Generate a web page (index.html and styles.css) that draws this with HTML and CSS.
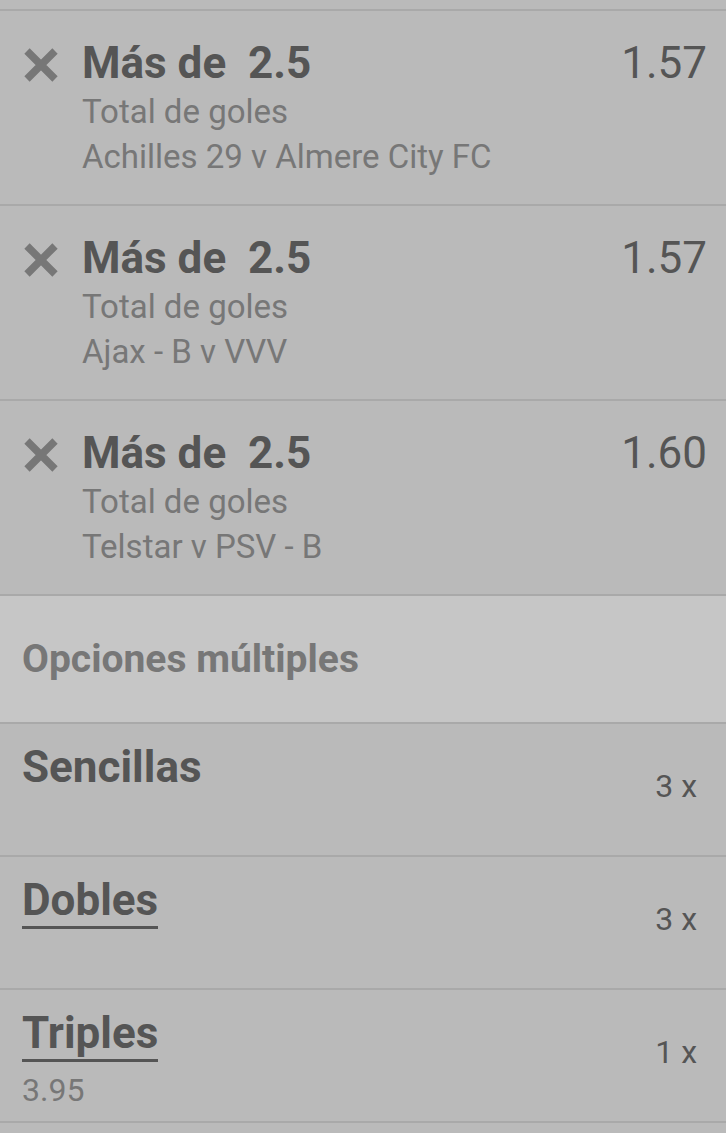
FILE: index.html
```html
<!doctype html>
<html lang="es">
<head>
    <meta charset="UTF-8">
    <meta name="viewport" content="width=device-width, initial-scale=1.0">
    <link rel="stylesheet" href="styles.css">
    <title>Boleto</title>
</head>
<body>
<div class="slip">

    <div class="bet">
        <svg class="remove" viewBox="0 0 36 36"><path d="M4 4 L32 32 M32 4 L4 32"/></svg>
        <div class="info">
            <div class="pick">Más de&nbsp; 2.5</div>
            <div class="market">Total de goles</div>
            <div class="market">Achilles 29 v Almere City FC</div>
        </div>
        <div class="odds">1.57</div>
    </div>

    <div class="bet">
        <svg class="remove" viewBox="0 0 36 36"><path d="M4 4 L32 32 M32 4 L4 32"/></svg>
        <div class="info">
            <div class="pick">Más de&nbsp; 2.5</div>
            <div class="market">Total de goles</div>
            <div class="market">Ajax - B v VVV</div>
        </div>
        <div class="odds">1.57</div>
    </div>

    <div class="bet">
        <svg class="remove" viewBox="0 0 36 36"><path d="M4 4 L32 32 M32 4 L4 32"/></svg>
        <div class="info">
            <div class="pick">Más de&nbsp; 2.5</div>
            <div class="market">Total de goles</div>
            <div class="market">Telstar v PSV - B</div>
        </div>
        <div class="odds">1.60</div>
    </div>

    <div class="section">Opciones múltiples</div>

    <div class="multi">
        <div class="multi-left">
            <div class="multi-name">Sencillas</div>
        </div>
        <div class="count">3 x</div>
    </div>

    <div class="multi">
        <div class="multi-left">
            <div class="multi-name link">Dobles</div>
        </div>
        <div class="count">3 x</div>
    </div>

    <div class="multi">
        <div class="multi-left">
            <div class="multi-name link">Triples</div>
            <div class="multi-odds">3.95</div>
        </div>
        <div class="count">1 x</div>
    </div>

</div>
</body>
</html>
```

FILE: styles.css
```css
html, body {
    margin: 0;
    padding: 0;
    background: #bababa;
}

body {
    font-family: Roboto, "Liberation Sans", sans-serif;
    color: #555;
}

.slip {
    padding-top: 9px;
}

.bet {
    display: flex;
    align-items: flex-start;
    height: 193px;
    border-top: 2px solid #a9a9a9;
    padding: 0 19px 0 23px;
}

.bet .remove {
    width: 36px;
    height: 36px;
    margin-top: 36px;
    flex: none;
}

.bet .remove path {
    stroke: #777;
    stroke-width: 7.5;
    fill: none;
}

.bet .info {
    flex: 1;
    margin-left: 23px;
    padding-top: 27px;
}

.pick {
    font-size: 44px;
    font-weight: bold;
    line-height: 51px;
    color: #555;
}

.market {
    font-size: 33px;
    line-height: 45px;
    color: #777;
}

.odds {
    font-size: 44px;
    line-height: 51px;
    padding-top: 27px;
    color: #555;
}

.section {
    border-top: 2px solid #a9a9a9;
    background: #c6c6c6;
    height: 126px;
    padding-left: 22px;
    font-size: 39px;
    font-weight: bold;
    line-height: 126px;
    color: #777;
}

.multi {
    display: flex;
    justify-content: space-between;
    border-top: 2px solid #a9a9a9;
    height: 131px;
    padding: 0 29px 0 22px;
}

.multi:last-child {
    border-bottom: 2px solid #a9a9a9;
}

.multi-left {
    padding-top: 18px;
}

.multi-name {
    display: inline-block;
    font-size: 44px;
    font-weight: bold;
    line-height: 51px;
    color: #555;
}

.multi-name.link {
    border-bottom: 3px solid #555;
}

.multi-odds {
    font-size: 32px;
    line-height: 40px;
    margin-top: 8px;
    color: #777;
}

.count {
    font-size: 32px;
    line-height: 40px;
    padding-top: 42px;
    color: #555;
}
```
